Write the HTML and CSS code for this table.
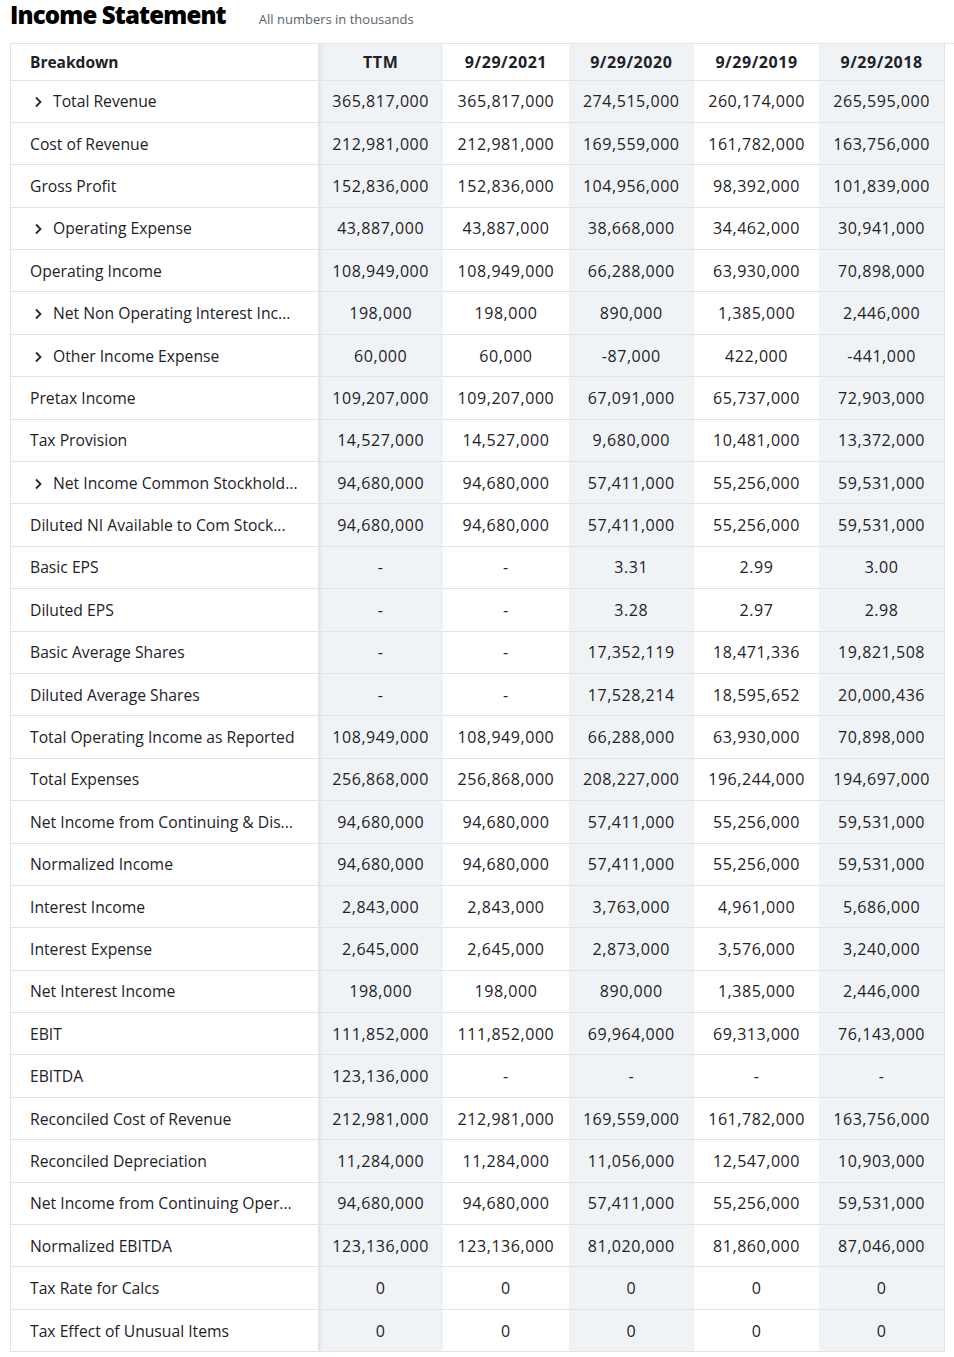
FILE: index.html
```html
<!DOCTYPE html>
<html>
<head>
<meta charset="utf-8">
<link rel="stylesheet" href="styles.css">
</head>
<body>
<div class="page">
  <div class="head">
    <h1 class="title">Income Statement</h1>
    <span class="sub">All numbers in thousands</span>
  </div>
  <div class="wrap">
    <table class="fin">
      <colgroup>
        <col class="c-name"><col class="c-num"><col class="c-num"><col class="c-num"><col class="c-num"><col class="c-num">
      </colgroup>
      <thead>
        <tr><th class="name">Breakdown</th><th class="s first">TTM</th><th>9/29/2021</th><th class="s">9/29/2020</th><th>9/29/2019</th><th class="s">9/29/2018</th></tr>
      </thead>
      <tbody>
        <tr><td class="name"><span class="chev"><svg width="9" height="12" viewBox="0 0 9 12"><path d="M2 1.5 L6.5 6 L2 10.5" fill="none" stroke="#232a31" stroke-width="1.8"/></svg></span>Total Revenue</td><td class="s first">365,817,000</td><td>365,817,000</td><td class="s">274,515,000</td><td>260,174,000</td><td class="s">265,595,000</td></tr>
        <tr><td class="name">Cost of Revenue</td><td class="s first">212,981,000</td><td>212,981,000</td><td class="s">169,559,000</td><td>161,782,000</td><td class="s">163,756,000</td></tr>
        <tr><td class="name">Gross Profit</td><td class="s first">152,836,000</td><td>152,836,000</td><td class="s">104,956,000</td><td>98,392,000</td><td class="s">101,839,000</td></tr>
        <tr><td class="name"><span class="chev"><svg width="9" height="12" viewBox="0 0 9 12"><path d="M2 1.5 L6.5 6 L2 10.5" fill="none" stroke="#232a31" stroke-width="1.8"/></svg></span>Operating Expense</td><td class="s first">43,887,000</td><td>43,887,000</td><td class="s">38,668,000</td><td>34,462,000</td><td class="s">30,941,000</td></tr>
        <tr><td class="name">Operating Income</td><td class="s first">108,949,000</td><td>108,949,000</td><td class="s">66,288,000</td><td>63,930,000</td><td class="s">70,898,000</td></tr>
        <tr><td class="name"><span class="chev"><svg width="9" height="12" viewBox="0 0 9 12"><path d="M2 1.5 L6.5 6 L2 10.5" fill="none" stroke="#232a31" stroke-width="1.8"/></svg></span>Net Non Operating Interest Inc...</td><td class="s first">198,000</td><td>198,000</td><td class="s">890,000</td><td>1,385,000</td><td class="s">2,446,000</td></tr>
        <tr><td class="name"><span class="chev"><svg width="9" height="12" viewBox="0 0 9 12"><path d="M2 1.5 L6.5 6 L2 10.5" fill="none" stroke="#232a31" stroke-width="1.8"/></svg></span>Other Income Expense</td><td class="s first">60,000</td><td>60,000</td><td class="s">-87,000</td><td>422,000</td><td class="s">-441,000</td></tr>
        <tr><td class="name">Pretax Income</td><td class="s first">109,207,000</td><td>109,207,000</td><td class="s">67,091,000</td><td>65,737,000</td><td class="s">72,903,000</td></tr>
        <tr><td class="name">Tax Provision</td><td class="s first">14,527,000</td><td>14,527,000</td><td class="s">9,680,000</td><td>10,481,000</td><td class="s">13,372,000</td></tr>
        <tr><td class="name"><span class="chev"><svg width="9" height="12" viewBox="0 0 9 12"><path d="M2 1.5 L6.5 6 L2 10.5" fill="none" stroke="#232a31" stroke-width="1.8"/></svg></span>Net Income Common Stockhold...</td><td class="s first">94,680,000</td><td>94,680,000</td><td class="s">57,411,000</td><td>55,256,000</td><td class="s">59,531,000</td></tr>
        <tr><td class="name">Diluted NI Available to Com Stock...</td><td class="s first">94,680,000</td><td>94,680,000</td><td class="s">57,411,000</td><td>55,256,000</td><td class="s">59,531,000</td></tr>
        <tr><td class="name">Basic EPS</td><td class="s first">-</td><td>-</td><td class="s">3.31</td><td>2.99</td><td class="s">3.00</td></tr>
        <tr><td class="name">Diluted EPS</td><td class="s first">-</td><td>-</td><td class="s">3.28</td><td>2.97</td><td class="s">2.98</td></tr>
        <tr><td class="name">Basic Average Shares</td><td class="s first">-</td><td>-</td><td class="s">17,352,119</td><td>18,471,336</td><td class="s">19,821,508</td></tr>
        <tr><td class="name">Diluted Average Shares</td><td class="s first">-</td><td>-</td><td class="s">17,528,214</td><td>18,595,652</td><td class="s">20,000,436</td></tr>
        <tr><td class="name">Total Operating Income as Reported</td><td class="s first">108,949,000</td><td>108,949,000</td><td class="s">66,288,000</td><td>63,930,000</td><td class="s">70,898,000</td></tr>
        <tr><td class="name">Total Expenses</td><td class="s first">256,868,000</td><td>256,868,000</td><td class="s">208,227,000</td><td>196,244,000</td><td class="s">194,697,000</td></tr>
        <tr><td class="name">Net Income from Continuing &amp; Dis...</td><td class="s first">94,680,000</td><td>94,680,000</td><td class="s">57,411,000</td><td>55,256,000</td><td class="s">59,531,000</td></tr>
        <tr><td class="name">Normalized Income</td><td class="s first">94,680,000</td><td>94,680,000</td><td class="s">57,411,000</td><td>55,256,000</td><td class="s">59,531,000</td></tr>
        <tr><td class="name">Interest Income</td><td class="s first">2,843,000</td><td>2,843,000</td><td class="s">3,763,000</td><td>4,961,000</td><td class="s">5,686,000</td></tr>
        <tr><td class="name">Interest Expense</td><td class="s first">2,645,000</td><td>2,645,000</td><td class="s">2,873,000</td><td>3,576,000</td><td class="s">3,240,000</td></tr>
        <tr><td class="name">Net Interest Income</td><td class="s first">198,000</td><td>198,000</td><td class="s">890,000</td><td>1,385,000</td><td class="s">2,446,000</td></tr>
        <tr><td class="name">EBIT</td><td class="s first">111,852,000</td><td>111,852,000</td><td class="s">69,964,000</td><td>69,313,000</td><td class="s">76,143,000</td></tr>
        <tr><td class="name">EBITDA</td><td class="s first">123,136,000</td><td>-</td><td class="s">-</td><td>-</td><td class="s">-</td></tr>
        <tr><td class="name">Reconciled Cost of Revenue</td><td class="s first">212,981,000</td><td>212,981,000</td><td class="s">169,559,000</td><td>161,782,000</td><td class="s">163,756,000</td></tr>
        <tr><td class="name">Reconciled Depreciation</td><td class="s first">11,284,000</td><td>11,284,000</td><td class="s">11,056,000</td><td>12,547,000</td><td class="s">10,903,000</td></tr>
        <tr><td class="name">Net Income from Continuing Oper...</td><td class="s first">94,680,000</td><td>94,680,000</td><td class="s">57,411,000</td><td>55,256,000</td><td class="s">59,531,000</td></tr>
        <tr><td class="name">Normalized EBITDA</td><td class="s first">123,136,000</td><td>123,136,000</td><td class="s">81,020,000</td><td>81,860,000</td><td class="s">87,046,000</td></tr>
        <tr><td class="name">Tax Rate for Calcs</td><td class="s first">0</td><td>0</td><td class="s">0</td><td>0</td><td class="s">0</td></tr>
        <tr><td class="name">Tax Effect of Unusual Items</td><td class="s first">0</td><td>0</td><td class="s">0</td><td>0</td><td class="s">0</td></tr>
      </tbody>
    </table>
  </div>
</div>
</body>
</html>
```

FILE: styles.css
```css
html, body {
  margin: 0;
  padding: 0;
  background: #fff;
}
body {
  font-family: "Open Sans", "Liberation Sans", sans-serif;
  color: #1d2228;
}
.page {
  padding: 0 0 0 10px;
}
.head {
  display: flex;
  align-items: baseline;
  gap: 33px;
  height: 43px;
}
.title {
  margin: 0;
  font-size: 24px;
  line-height: 29px;
  font-weight: 800;
  color: #000;
  letter-spacing: -0.85px;
}
.sub {
  font-size: 13px;
  color: #5b636a;
}
.wrap {
  border-top: 1px solid #e0e4e9;
}
.fin {
  border-collapse: collapse;
  table-layout: fixed;
  width: 934px;
  font-size: 16px;
  letter-spacing: 0.55px;
}
.c-name { width: 307.5px; }
.c-num { width: 125.3px; }
.fin th, .fin td {
  box-sizing: border-box;
  padding: 0;
  text-align: center;
  border-bottom: 1px solid #e0e4e9;
  white-space: nowrap;
  overflow: hidden;
}
.fin th {
  height: 36px;
  font-weight: 700;
}
.fin td {
  height: 42.4px;
  font-weight: 400;
}
.fin .name {
  text-align: left;
  padding-left: 19px;
  border-left: 1px solid #e0e4e9;
  font-size: 15.7px;
  letter-spacing: 0;
}
.fin th.name {
  font-size: 15.5px;
}
.fin th:last-child, .fin td:last-child {
  border-right: 1px solid #e0e4e9;
}
.fin .s {
  background: #f0f3f5;
}
.fin .first {
  background: linear-gradient(to right, #dfe3e8 0, #eef1f4 5px, #f0f3f5 8px);
}
.chev {
  display: inline-block;
  width: 23px;
  padding-left: 4px;
  box-sizing: border-box;
  vertical-align: -1px;
}
.chev svg {
  display: block;
}
```
